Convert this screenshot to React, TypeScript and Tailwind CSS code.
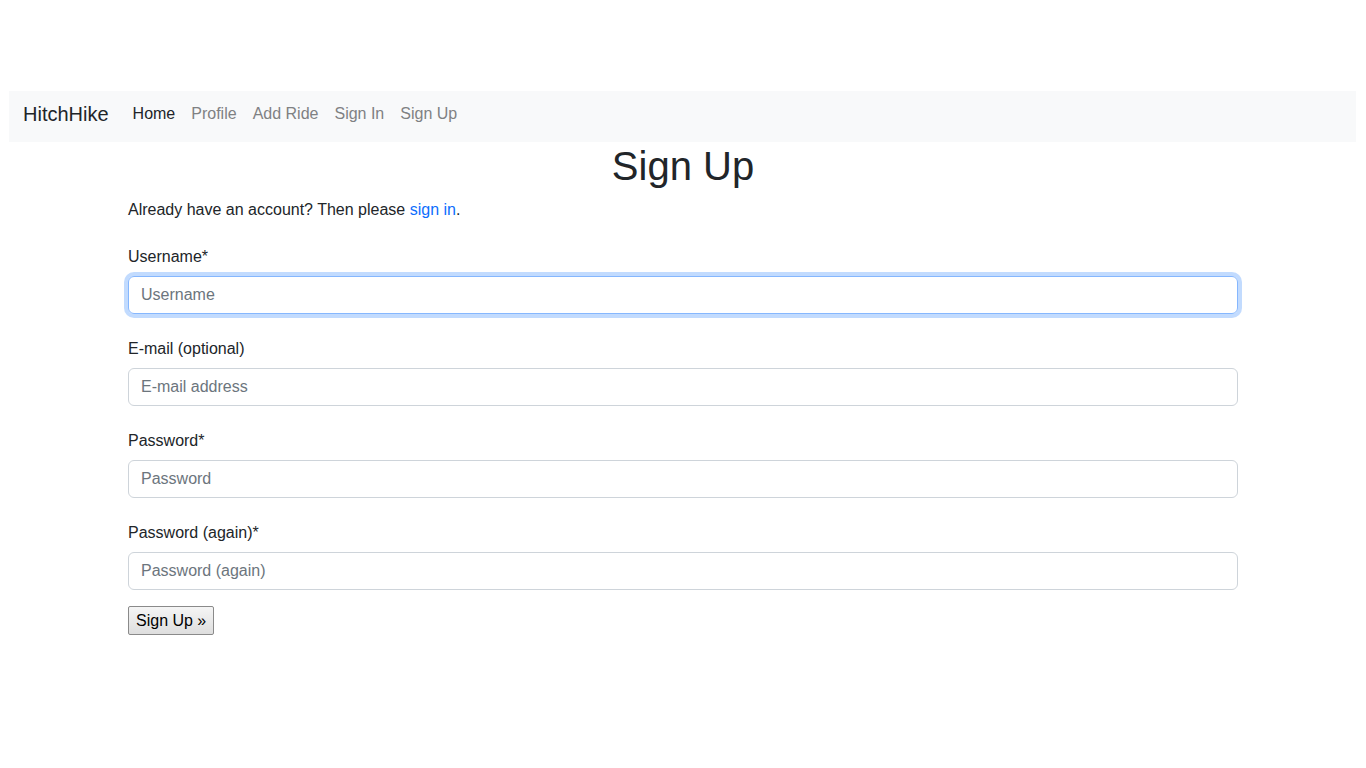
export default function App() {
  const font = { fontFamily: '"Liberation Sans", Arial, sans-serif' };
  const fields = [
    { label: "Username*", ph: "Username", focus: true },
    { label: "E-mail (optional)", ph: "E-mail address" },
    { label: "Password*", ph: "Password" },
    { label: "Password (again)*", ph: "Password (again)" },
  ];
  return (
    <div className="min-h-[768px] bg-white text-[#212529] text-[16px] leading-[24px]" style={font}>
      <div className="pt-[91px] px-[9px] pr-[10px]">
        <nav className="h-[51px] bg-[#f8f9fa] flex items-center pl-[14px] pb-[6px]">
          <span className="text-[20px] leading-[30px] text-[#212529] mr-[24px]">HitchHike</span>
          <div className="flex items-center gap-[16px] text-[16px]">
            <span className="text-[#212529]">Home</span>
            <span className="text-[#7f8183]">Profile</span>
            <span className="text-[#7f8183]">Add Ride</span>
            <span className="text-[#7f8183]">Sign In</span>
            <span className="text-[#7f8183]">Sign Up</span>
          </div>
        </nav>
      </div>
      <div className="w-[1110px] mx-auto">
        <h1 className="text-center text-[40px] leading-[48px] mb-[8px]">Sign Up</h1>
        <p className="mb-[23px]">
          Already have an account? Then please <span className="text-[#0d6efd]">sign in</span>.
        </p>
        <form className="flex flex-col">
          {fields.map((f) => (
            <div key={f.label} className="mb-[23px]">
              <label className="block mb-[7px]">{f.label}</label>
              <input
                placeholder={f.ph}
                className={
                  "block w-full h-[38px] px-[12px] rounded-[6px] border outline-none placeholder:text-[#6c757d] text-[16px] " +
                  (f.focus
                    ? "border-[#86b7fe] shadow-[0_0_0_4px_rgba(13,110,253,0.25)]"
                    : "border-[#ced4da]")
                }
              />
            </div>
          ))}
          <div className="-mt-[7px]">
            <button
              type="button"
              className="h-[29px] px-[7px] border border-[#8a8a8a] rounded-[2px] bg-gradient-to-b from-[#f5f5f5] to-[#dedede] text-[16px] text-black leading-[20px]"
              style={font}
            >
              Sign Up »
            </button>
          </div>
        </form>
      </div>
    </div>
  );
}
